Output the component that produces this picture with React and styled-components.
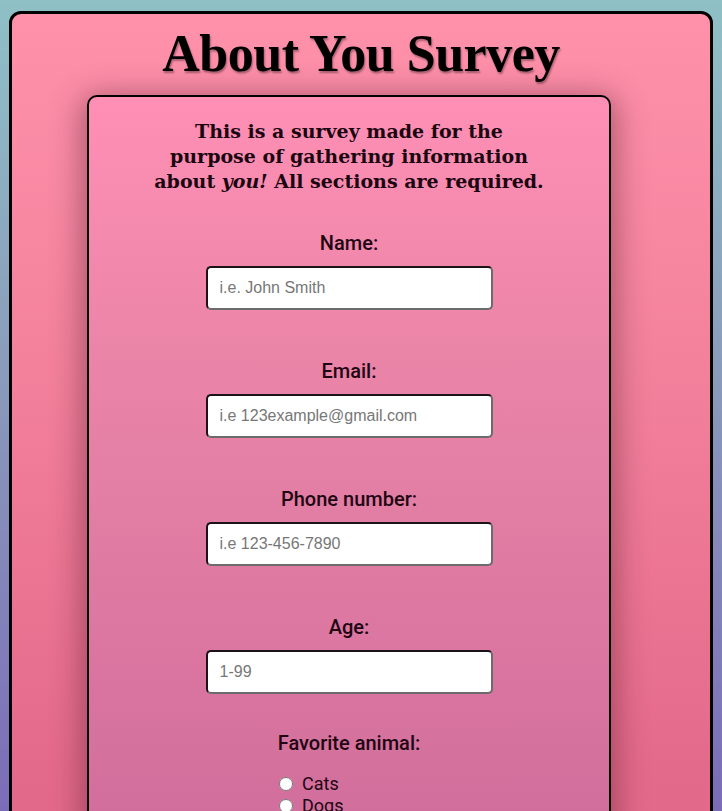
import React from 'react'
import styled, { createGlobalStyle } from 'styled-components'

const GlobalStyle = createGlobalStyle`
  html, body {
    margin: 0;
    padding: 0;
  }
  body {
    min-height: 100vh;
    background: linear-gradient(180deg, #8fc0c6 0%, #8a9cbb 45%, #7b6cb8 100%);
    background-attachment: fixed;
    font-family: Roboto, "Liberation Sans", sans-serif;
  }
`

const Page = styled.div`
  padding: 11px 9px 40px 9px;
`

const OuterCard = styled.main`
  border: 3px solid #000;
  border-radius: 12px;
  background: linear-gradient(180deg, #ff91ab 0px, #f3819c 350px, #e46a8b 750px, #dd6486 1100px);
  padding: 10px 0 40px;
  display: flex;
  flex-direction: column;
  align-items: center;
`

const Title = styled.h1`
  margin: 0 0 11px;
  font-family: "Liberation Serif", serif;
  font-weight: 700;
  font-size: 52px;
  line-height: 60px;
  letter-spacing: -0.5px;
  color: #000;
  text-shadow: 1px 2px 2px rgba(0, 0, 0, 0.35);
`

const InnerCard = styled.section`
  align-self: flex-start;
  margin-left: 75px;
  width: 520px;
  border: 2px solid #000;
  border-radius: 10px;
  background: linear-gradient(180deg, #ff8fb5 0px, #eb85a8 250px, #d26f9c 700px, #c86696 1000px);
  box-shadow: 0 6px 30px 6px rgba(90, 30, 50, 0.45);
  padding: 22px 0 30px;
  display: flex;
  flex-direction: column;
  align-items: center;
`

const Intro = styled.p`
  margin: 0 0 37px;
  text-align: center;
  font-family: "DejaVu Serif", serif;
  font-weight: 700;
  font-size: 19px;
  line-height: 25px;
  color: #1a0610;
  em {
    font-style: italic;
  }
`

const Field = styled.div`
  display: flex;
  flex-direction: column;
  align-items: center;
  margin-bottom: ${p => p.$gap || 49}px;
`

const Label = styled.label`
  font-size: 20px;
  font-weight: 500;
  line-height: 24px;
  color: #1e0612;
  margin-bottom: ${p => p.$after || 11}px;
`

const Input = styled.input`
  box-sizing: border-box;
  width: 287px;
  height: 44px;
  padding: 0 12px;
  border: 2px solid #1c1218;
  border-right-color: #6b6b6b;
  border-bottom-color: #6b6b6b;
  border-radius: 5px;
  background: #fff;
  font-family: "Liberation Sans", Arial, sans-serif;
  font-size: 16px;
  outline: none;
  &::placeholder {
    color: #777;
  }
`

const RadioGroup = styled.div`
  display: flex;
  flex-direction: column;
  align-items: flex-start;
  width: 140px;
`

const RadioRow = styled.label`
  display: flex;
  align-items: center;
  font-size: 18px;
  line-height: 22px;
  color: #1e0612;
  input {
    margin: 0 9px 0 0;
    width: 14px;
    height: 14px;
  }
`

const fields = [
  { id: 'name', label: 'Name:', placeholder: 'i.e. John Smith', type: 'text' },
  { id: 'email', label: 'Email:', placeholder: 'i.e 123example@gmail.com', type: 'email' },
  { id: 'phone', label: 'Phone number:', placeholder: 'i.e 123-456-7890', type: 'tel' },
  { id: 'age', label: 'Age:', placeholder: '1-99', type: 'number', gap: 37 },
]

const animals = ['Cats', 'Dogs', 'Birds', 'Fish']

export default function App() {
  return (
    <>
      <GlobalStyle />
      <Page>
        <OuterCard>
          <Title>About You Survey</Title>
          <InnerCard>
            <Intro>
              This is a survey made for the<br />
              purpose of gathering information<br />
              about <em>you!</em> All sections are required.
            </Intro>
            {fields.map(f => (
              <Field key={f.id} $gap={f.gap}>
                <Label htmlFor={f.id}>{f.label}</Label>
                <Input id={f.id} type={f.type} placeholder={f.placeholder} />
              </Field>
            ))}
            <Field>
              <Label $after={18}>Favorite animal:</Label>
              <RadioGroup>
                {animals.map(a => (
                  <RadioRow key={a}>
                    <input type="radio" name="animal" value={a} />
                    {a}
                  </RadioRow>
                ))}
              </RadioGroup>
            </Field>
          </InnerCard>
        </OuterCard>
      </Page>
    </>
  )
}
